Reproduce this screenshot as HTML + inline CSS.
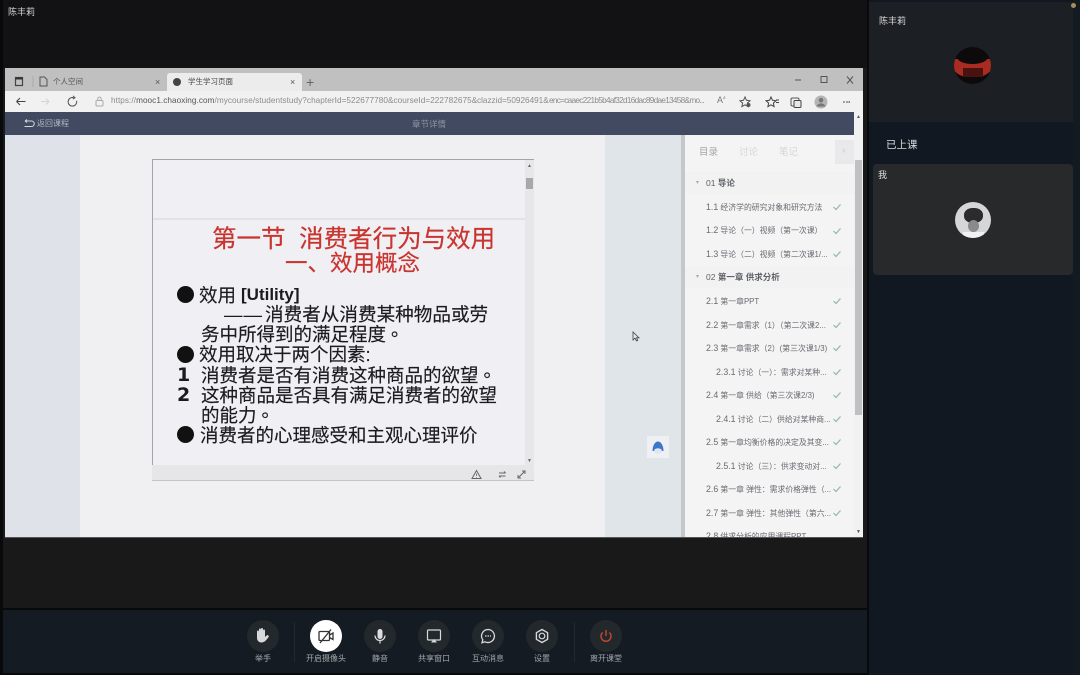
<!DOCTYPE html>
<html lang="zh"><head><meta charset="utf-8"><title>课堂</title>
<style>
html,body{margin:0;padding:0;background:#08090b}
body{width:1080px;height:675px;position:relative;overflow:hidden;font-family:"Liberation Sans","Noto Sans CJK SC",sans-serif}
.a{position:absolute}
.t{position:absolute;white-space:nowrap;line-height:1}
.s{position:absolute;white-space:nowrap;line-height:1;font-size:7.85px;color:#686b70;left:706px}
.s i{font-style:normal;font-size:8.8px}
.sl{position:absolute;white-space:nowrap;font-size:18.5px;line-height:1;color:#1b1b1d;font-family:"Liberation Sans","Noto Sans CJK TC",sans-serif;-webkit-text-stroke:.15px #1b1b1d}
.sl u{text-decoration:none;position:relative;left:5px;top:-5px}
.b{position:absolute;width:17px;height:17px;border-radius:50%;background:#111;left:177px}
.btn{position:absolute;top:620px;width:32px;height:32px;border-radius:50%;background:#23282d}
.btn svg{position:absolute;left:0;top:0}
.lb{position:absolute;top:655px;width:70px;text-align:center;font-size:8px;line-height:1;color:#a3a7aa}
.u{position:absolute;top:97px;white-space:nowrap;line-height:1;font-size:8.2px;color:#8b8b8b}
</style></head><body>

<!-- main stage -->
<div class="a" style="left:3px;top:0;width:864px;height:608px;background:#191919"></div>
<div class="a" style="left:3px;top:0;width:864px;height:68px;background:#121214"></div>
<div class="t" style="left:8px;top:8px;font-size:9px;color:#d5d5d5">陈丰莉</div>

<!-- toolbar bg -->
<div class="a" style="left:3px;top:610px;width:864px;height:63px;background:#141b23"></div>

<!-- right column -->
<div class="a" style="left:869px;top:0;width:211px;height:675px;background:#121821"></div>
<div class="a" style="left:869px;top:2px;width:204px;height:120px;background:#1c2024"></div>
<div class="a" style="left:1073px;top:0;width:7px;height:675px;background:#141a21"></div>
<div class="a" style="left:1071px;top:3px;width:5px;height:5px;border-radius:50%;background:#a38e5f"></div>
<div class="t" style="left:879px;top:17px;font-size:9px;color:#d8d8d8">陈丰莉</div>
<div class="a" style="left:954px;top:47px;width:37px;height:37px;border-radius:50%;overflow:hidden;background:#0c0a0b">
  <div class="a" style="left:-4px;top:12px;width:45px;height:18px;background:#a92b21;border-radius:0 0 22px 22px"></div>
  <div class="a" style="left:3px;top:3px;width:31px;height:14px;border-radius:50%;background:#0c0a0b"></div>
  <div class="a" style="left:9px;top:21px;width:20px;height:9px;background:#4a120e"></div>
</div>
<div class="t" style="left:886px;top:140px;font-size:10.5px;color:#dcdcdc">已上课</div>
<div class="a" style="left:873px;top:164px;width:200px;height:111px;border-radius:4px;background:#28292b"></div>
<div class="t" style="left:878px;top:171px;font-size:9px;color:#e2e2e2">我</div>
<div class="a" style="left:955px;top:202px;width:36px;height:36px;border-radius:50%;overflow:hidden;background:#d6d6d6">
  <div class="a" style="left:9px;top:6px;width:19px;height:15px;border-radius:45%;background:#2b2b2d"></div>
  <div class="a" style="left:13px;top:18px;width:11px;height:12px;border-radius:50%;background:#8a8a8c"></div>
  <div class="a" style="left:8px;top:30px;width:21px;height:6px;background:#f1f1f1"></div>
</div>

<!-- browser window -->
<div class="a" style="left:5px;top:68px;width:858px;height:469px;background:#f0f0f3"></div>
<div class="a" style="left:5px;top:68px;width:858px;height:23px;background:#c0c0c0"></div>
<!-- tabs -->
<svg class="a" style="left:14px;top:76px" width="30" height="11" viewBox="0 0 30 11"><rect x="1.5" y="1.5" width="7" height="8" fill="none" stroke="#444" stroke-width="1.2"/><path d="M1.5 2.5h7" stroke="#333" stroke-width="2"/><path d="M19 0v11" stroke="#aaa"/></svg>
<svg class="a" style="left:39px;top:76px" width="9" height="11" viewBox="0 0 9 11"><path d="M1 1h4.500l2.500 2.500V10H1z" fill="none" stroke="#555"/></svg>
<div class="t" style="left:53px;top:78px;font-size:7.5px;color:#555">个人空间</div>
<div class="t" style="left:155px;top:78px;font-size:9px;color:#555">×</div>
<div class="a" style="left:167px;top:73px;width:135px;height:18px;background:#ececec;border-radius:3px 3px 0 0"></div>
<div class="a" style="left:173px;top:78px;width:8px;height:8px;border-radius:50%;background:#444"></div>
<div class="t" style="left:188px;top:78px;font-size:7.5px;color:#444">学生学习页面</div>
<div class="t" style="left:290px;top:78px;font-size:9px;color:#555">×</div>
<div class="t" style="left:306px;top:75px;font-size:14px;color:#666">+</div>
<svg class="a" style="left:790px;top:72px" width="70" height="16" viewBox="0 0 70 16"><path d="M5 8h6" stroke="#555"/><rect x="31" y="4.500" width="6" height="6" fill="none" stroke="#555"/><path d="M57 4.500l6 7M63 4.500l-6 7" stroke="#555"/></svg>
<!-- toolbar -->
<div class="a" style="left:5px;top:91px;width:858px;height:21px;background:#f1f1f1"></div>
<svg class="a" style="left:14px;top:95px" width="66" height="13" viewBox="0 0 66 13"><path d="M2.500 6.500h9M2.500 6.500l3.500-3.500M2.500 6.500l3.500 3.500" fill="none" stroke="#444"/><path d="M27 6.500h8M35 6.500l-3-3M35 6.500l-3 3" fill="none" stroke="#d4d4d4"/><path d="M60 2.800a4.300 4.300 0 1 0 2.600 3" fill="none" stroke="#555" stroke-width="1"/><path d="M59 .800l2 2-2.200 1.300" fill="none" stroke="#555"/></svg>
<svg class="a" style="left:95px;top:96px" width="9" height="11" viewBox="0 0 9 11"><rect x="1" y="4.500" width="7" height="5.500" rx="1" fill="none" stroke="#aaa"/><path d="M2.800 4.500V2.800a1.700 1.700 0 0 1 3.400 0v1.700" fill="none" stroke="#aaa"/></svg>
<div class="u" style="left:111px;letter-spacing:.06px">https://<span style="color:#555">mooc1.chaoxing.com</span>/mycourse/studentstudy?chapterId=522677780&amp;courseId=222782675&amp;</div>
<div class="u" style="left:477px">clazzid=50926491&amp;</div>
<div class="u" style="left:549px;letter-spacing:-.68px">enc=caaec221b5b4af32d16dac89dae13458&amp;mo...</div>
<div class="t" style="left:717px;top:96px;font-size:9px;color:#777">A<sup style="font-size:5px">ა</sup></div>
<svg class="a" style="left:738px;top:95px" width="112" height="14" viewBox="0 0 112 14"><path d="M7 2l1.500 3.300 3.500.400-2.600 2.400.7 3.500L7 9.800l-3.100 1.800.7-3.500L2 5.700l3.500-.400z" fill="none" stroke="#555"/><circle cx="10.500" cy="10" r="2" fill="#555"/><path d="M33 2l1.500 3.300 3.500.400-2.600 2.400.7 3.500-3.100-1.800-3.100 1.800.7-3.500L28 5.700l3.500-.400z" fill="none" stroke="#444"/><path d="M38 5h3M38 7.500h3" stroke="#444"/><rect x="53" y="3" width="8" height="8" rx="1.500" fill="none" stroke="#555"/><rect x="56" y="5.500" width="7" height="7" rx="1" fill="#e8e8e8" stroke="#444"/><circle cx="83" cy="7" r="6.500" fill="#b5b5b5"/><circle cx="83" cy="5.200" r="2.300" fill="#777"/><path d="M78.500 11.500a4.600 4 0 0 1 9 0z" fill="#777"/><circle cx="106" cy="7" r=".8" fill="#444"/><circle cx="109" cy="7" r=".8" fill="#444"/><circle cx="111.200" cy="7" r=".8" fill="#444"/></svg>
<!-- header bar -->
<div class="a" style="left:5px;top:112px;width:849px;height:23px;background:#414a60"></div>
<svg class="a" style="left:22px;top:119px" width="13" height="9" viewBox="0 0 13 9"><path d="M3 2h6.500a2.700 2.700 0 0 1 0 5.500H2.500M3 2L5 .500M3 2l2 1.500" fill="none" stroke="#d5d8de" stroke-width="1"/></svg>
<div class="t" style="left:37px;top:120px;font-size:8px;color:#b4b9c4">返回课程</div>
<div class="t" style="left:412px;top:120px;font-size:8.500px;color:#8e94a4">章节详情</div>
<!-- page bands -->
<div class="a" style="left:5px;top:135px;width:75px;height:402px;background:#dfe3e9"></div>
<div class="a" style="left:605px;top:135px;width:76px;height:402px;background:#e0e5ea"></div>
<div class="a" style="left:681px;top:135px;width:4px;height:402px;background:#c5c7ca"></div>
<div class="a" style="left:685px;top:135px;width:169px;height:402px;background:#f4f4f5"></div>
<div class="a" style="left:854px;top:112px;width:9px;height:425px;background:#f1f1f2"></div>
<div class="a" style="left:855px;top:160px;width:7px;height:255px;background:#c0c0c2"></div>
<div class="t" style="left:856px;top:115px;font-size:5px;color:#555">▲</div>
<div class="t" style="left:856px;top:530px;font-size:5px;color:#555">▼</div>
<div class="a" style="left:5px;top:537px;width:858px;height:1px;background:#55565a"></div>

<!-- viewer -->
<div class="a" style="left:152px;top:159px;width:382px;height:321px;background:#f0eff3;box-sizing:border-box;border:1px solid #a5a5a8;border-bottom:0;border-right:0"></div>
<div class="a" style="left:153px;top:218px;width:372px;height:2px;background:#e2e2e4"></div>
<div class="a" style="left:525px;top:160px;width:9px;height:305px;background:#e7e7e9"></div>
<div class="a" style="left:526px;top:178px;width:7px;height:11px;background:#a8a8ab"></div>
<div class="t" style="left:527px;top:164px;font-size:5px;color:#666">▲</div>
<div class="t" style="left:527px;top:459px;font-size:5px;color:#666">▼</div>
<div class="a" style="left:152px;top:465px;width:382px;height:16px;background:#e6e6e8;border-bottom:1px solid #c4c4c6;box-sizing:border-box"></div>
<svg class="a" style="left:471px;top:469px" width="58" height="11" viewBox="0 0 58 11"><path d="M5.500 1.500L10 9.500H1z" fill="none" stroke="#666"/><path d="M5.500 4.500v2.500M5.500 8v.600" stroke="#666" stroke-width=".8"/><path d="M28 4h6.500M28 7h6.500M33 2.500l1.500 1.500M29.500 8.500L28 7" fill="none" stroke="#666"/><path d="M47 9l7-7M51 2h3v3M47 6v3h3" fill="none" stroke="#666"/></svg>

<!-- slide text -->
<div class="t" style="left:212px;top:228px;font-size:24.500px;color:#c9342f;-webkit-text-stroke:.2px #c9342f;white-space:pre">第一节  消费者行为与效用</div>
<div class="t" style="left:285px;top:253px;font-size:22.500px;color:#c9342f;-webkit-text-stroke:.2px #c9342f">一、效用概念</div>
<div class="b" style="top:286px"></div>
<div class="sl" style="left:199px;top:287px">效用</div>
<div class="t" style="left:241px;top:286px;font-size:17px;font-weight:bold;color:#1b1b1d">[Utility]</div>
<div class="sl" style="left:224px;top:306px;font-family:'Liberation Sans',sans-serif;letter-spacing:1px;-webkit-text-stroke:0">——</div>
<div class="sl" style="left:265px;top:306px;font-size:18.6px">消费者从消费某种物品或劳</div>
<div class="sl" style="left:201px;top:326px">务中所得到的满足程度<u>。</u></div>
<div class="b" style="top:346px"></div>
<div class="sl" style="left:199px;top:346px">效用取决于两个因素:</div>
<div class="t" style="left:177px;top:366px;font-size:19px;font-weight:bold;color:#1b1b1d;font-family:'DejaVu Sans',sans-serif">1</div>
<div class="sl" style="left:201px;top:367px">消费者是否有消费这种商品的欲望<u>。</u></div>
<div class="t" style="left:177px;top:386px;font-size:19px;font-weight:bold;color:#1b1b1d;font-family:'DejaVu Sans',sans-serif">2</div>
<div class="sl" style="left:201px;top:387px">这种商品是否具有满足消费者的欲望</div>
<div class="sl" style="left:201px;top:407px">的能力<u>。</u></div>
<div class="b" style="top:426px"></div>
<div class="sl" style="left:200px;top:427px">消费者的心理感受和主观心理评价</div>

<!-- cursor -->
<svg class="a" style="left:632px;top:331px" width="8" height="11" viewBox="0 0 8 11"><path d="M1 1v8l2-1.800L4.500 10l1.200-.600L4.500 6.800H7z" fill="#e8e8e8" stroke="#444" stroke-width=".8"/></svg>
<!-- floating button -->
<div class="a" style="left:647px;top:436px;width:22px;height:22px;background:#eef0f4"></div>
<svg class="a" style="left:651px;top:440px" width="14" height="15" viewBox="0 0 14 15"><path d="M1.500 11C1.500 5.500 4 1.500 7 1.500S12.500 5.500 12.500 11z" fill="#3d78c8"/><ellipse cx="7" cy="11" rx="4" ry="2.800" fill="#dfe6f2"/></svg>

<!-- side panel -->
<div class="t" style="left:699px;top:148px;font-size:9.500px;color:#a6a6a8">目录</div>
<div class="t" style="left:739px;top:148px;font-size:9.500px;color:#d6d6d8">讨论</div>
<div class="t" style="left:779px;top:148px;font-size:9.500px;color:#d6d6d8">笔记</div>
<div class="a" style="left:835px;top:140px;width:19px;height:24px;background:#e9e9eb"></div>
<div class="t" style="left:842px;top:146px;font-size:10px;color:#c8c8ca">›</div>
<div class="a" style="left:685px;top:172px;width:169px;height:22px;background:#f2f2f3"></div>
<div class="a" style="left:685px;top:267px;width:169px;height:21px;background:#f2f2f3"></div>
<div class="t" style="left:696px;top:180px;font-size:6px;color:#aaa">▾</div>
<div class="t" style="left:706px;top:179px;font-size:8.500px;color:#5e6166"><span>01 </span><b>导论</b></div>
<div class="t" style="left:696px;top:274px;font-size:6px;color:#aaa">▾</div>
<div class="t" style="left:706px;top:273px;font-size:8.500px;color:#5e6166"><span>02 </span><b>第一章 供求分析</b></div>

<div class="s" style="top:203px"><i>1.1</i> 经济学的研究对象和研究方法</div>
<div class="s" style="top:226px"><i>1.2</i> 导论（一）视频（第一次课）</div>
<div class="s" style="top:250px"><i>1.3</i> 导论（二）视频（第二次课1/...</div>
<div class="s" style="top:297px"><i>2.1</i> 第一章PPT</div>
<div class="s" style="top:321px"><i>2.2</i> 第一章需求（1）（第二次课2...</div>
<div class="s" style="top:344px"><i>2.3</i> 第一章需求（2）(第三次课1/3)</div>
<div class="s" style="top:368px;left:716px"><i>2.3.1</i> 讨论（一）：需求对某种...</div>
<div class="s" style="top:391px"><i>2.4</i> 第一章 供给（第三次课2/3)</div>
<div class="s" style="top:415px;left:716px"><i>2.4.1</i> 讨论（二）供给对某种商...</div>
<div class="s" style="top:438px"><i>2.5</i> 第一章均衡价格的决定及其变...</div>
<div class="s" style="top:462px;left:716px"><i>2.5.1</i> 讨论（三）：供求变动对...</div>
<div class="s" style="top:485px"><i>2.6</i> 第一章 弹性：需求价格弹性（...</div>
<div class="s" style="top:509px"><i>2.7</i> 第一章 弹性：其他弹性（第六...</div>
<div class="a" style="left:685px;top:532px;width:169px;height:5px;overflow:hidden"><div class="s" style="top:0;left:21px"><i>2.8</i> 供求分析的应用课程PPT</div></div>

<svg class="a" style="left:832px;top:200px" width="10" height="320" viewBox="0 0 10 320" fill="none" stroke="#8fb8a4" stroke-width="1.200">
<path d="M1.500 7l2.500 2.500 4.500-5"/><path d="M1.500 31l2.500 2.500 4.500-5"/><path d="M1.500 54l2.500 2.500 4.500-5"/><path d="M1.500 101l2.500 2.500 4.500-5"/><path d="M1.500 125l2.500 2.500 4.500-5"/><path d="M1.500 148l2.500 2.500 4.500-5"/><path d="M1.500 172l2.500 2.500 4.500-5"/><path d="M1.500 195l2.500 2.500 4.500-5"/><path d="M1.500 219l2.500 2.500 4.500-5"/><path d="M1.500 242l2.500 2.500 4.500-5"/><path d="M1.500 266l2.500 2.500 4.500-5"/><path d="M1.500 289l2.500 2.500 4.500-5"/><path d="M1.500 313l2.500 2.500 4.500-5"/>
</svg>

<!-- bottom controls -->
<div class="btn" style="left:247px"><svg width="32" height="32" viewBox="0 0 32 32"><path d="M10 16v-4.500a1 1 0 0 1 2 0V14 9.500a1 1 0 0 1 2 0V14 9a1 1 0 0 1 2 0v5-3.500a1 1 0 0 1 2 0V17l1.500-1.500c1.200-1 3 .400 2 1.800l-2.500 3c-1.200 1.500-3 2.200-4.500 2.200-3 0-4.500-2.200-4.500-4.500z" fill="#d6d8da"/></svg></div>
<div class="lb" style="left:228px">举手</div>
<div class="a" style="left:294px;top:622px;width:1px;height:40px;background:#23292f"></div>
<div class="btn" style="left:310px;background:#fff"><svg width="32" height="32" viewBox="0 0 32 32"><rect x="9" y="11.500" width="10.500" height="9" rx="1" fill="none" stroke="#333" stroke-width="1.300"/><path d="M19.500 15l3.500-2v6.500l-3.500-2" fill="none" stroke="#333" stroke-width="1.300"/><path d="M10 23l11-13.500" stroke="#333" stroke-width="1.300"/></svg></div>
<div class="lb" style="left:291px">开启摄像头</div>
<div class="btn" style="left:364px"><svg width="32" height="32" viewBox="0 0 32 32"><rect x="13.500" y="9" width="5" height="10" rx="2.500" fill="#dcdde0"/><path d="M11 15.500a5 5 0 0 0 10 0M16 20.500v3" fill="none" stroke="#dcdde0" stroke-width="1.200"/></svg></div>
<div class="lb" style="left:345px">静音</div>
<div class="btn" style="left:418px"><svg width="32" height="32" viewBox="0 0 32 32"><rect x="9.500" y="10" width="13" height="10" rx="1" fill="none" stroke="#d6d8da" stroke-width="1.200"/><path d="M13 22.500h6l-3-3.500z" fill="#d6d8da"/></svg></div>
<div class="lb" style="left:399px">共享窗口</div>
<div class="btn" style="left:472px"><svg width="32" height="32" viewBox="0 0 32 32"><path d="M16 9.500a6.500 6.500 0 1 1-3 12.300l-3 1 .800-3A6.500 6.500 0 0 1 16 9.500z" fill="none" stroke="#d6d8da" stroke-width="1.300"/><path d="M13 16h6" stroke="#d6d8da" stroke-width="1.300" stroke-dasharray="1.500 1"/></svg></div>
<div class="lb" style="left:453px">互动消息</div>
<div class="btn" style="left:526px"><svg width="32" height="32" viewBox="0 0 32 32"><circle cx="16" cy="16" r="2.800" fill="none" stroke="#d6d8da" stroke-width="1.200"/><path d="M16 9.500l5.600 3.200v6.600L16 22.500l-5.600-3.200v-6.600z" fill="none" stroke="#d6d8da" stroke-width="1.400" stroke-linejoin="round"/></svg></div>
<div class="lb" style="left:507px">设置</div>
<div class="a" style="left:574px;top:622px;width:1px;height:40px;background:#23292f"></div>
<div class="btn" style="left:590px"><svg width="32" height="32" viewBox="0 0 32 32"><path d="M12.700 12.500a5 5 0 1 0 6.600 0" fill="none" stroke="#c4492f" stroke-width="1.400"/><path d="M16 10v6" stroke="#c4492f" stroke-width="1.400"/></svg></div>
<div class="lb" style="left:571px">离开课堂</div>

</body></html>
